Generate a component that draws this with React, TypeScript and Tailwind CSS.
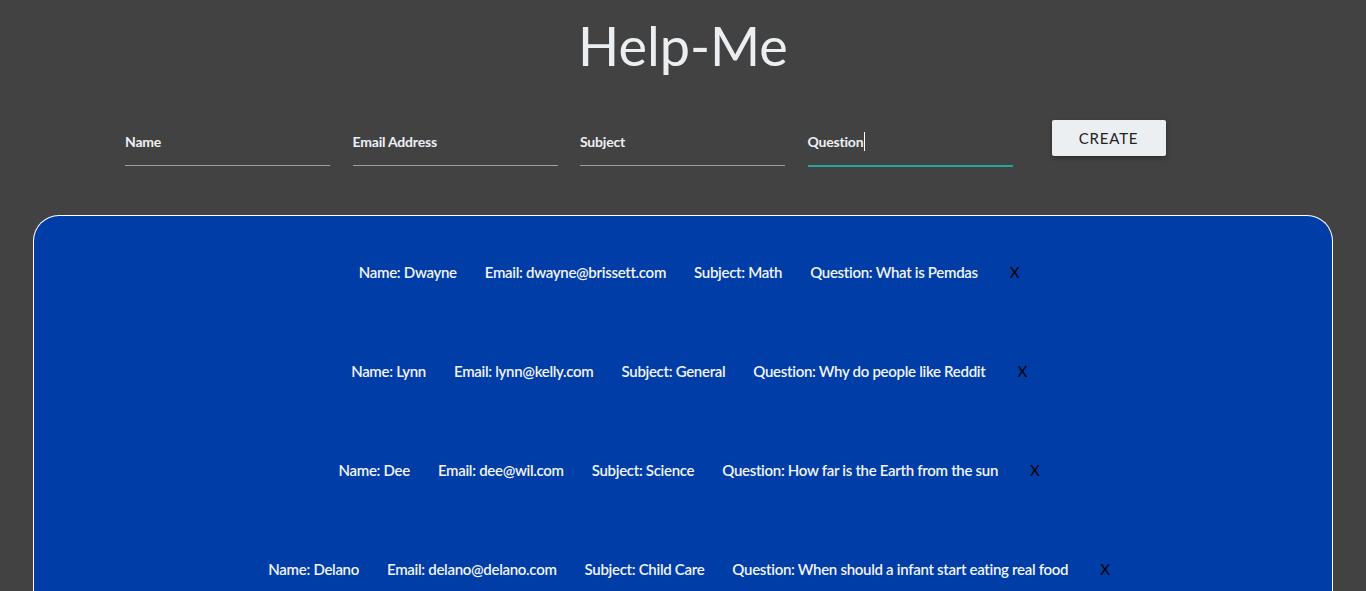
import React from "react";

type Ticket = { name: string; email: string; subject: string; question: string };

const tickets: Ticket[] = [
  { name: "Dwayne", email: "dwayne@brissett.com", subject: "Math", question: "What is Pemdas" },
  { name: "Lynn", email: "lynn@kelly.com", subject: "General", question: "Why do people like Reddit" },
  { name: "Dee", email: "dee@wil.com", subject: "Science", question: "How far is the Earth from the sun" },
  { name: "Delano", email: "delano@delano.com", subject: "Child Care", question: "When should a infant start eating real food" },
];

const fields = ["Name", "Email Address", "Subject", "Question"];

export default function App() {
  return (
    <div
      className="min-h-[591px] h-[591px] overflow-hidden bg-[#424242]"
      style={{ fontFamily: "Lato, 'Open Sans', sans-serif" }}
    >
      {/* Title */}
      <h1 className="pt-[10px] text-center text-[54px] leading-[72px] font-normal text-[#eceff1]">Help-Me</h1>

      {/* Form */}
      <div className="mt-[45px] flex items-start pl-[125px]">
        <div className="flex gap-[22.5px]">
          {fields.map((f, i) => (
            <div key={f} className="w-[205px]">
              <div className="flex h-[28px] items-center text-[14px] font-bold tracking-[-0.2px] text-[#eef0f4]">
                {f}
                {i === 3 && <span className="ml-[1px] inline-block h-[19px] w-[1px] bg-white" />}
              </div>
              <div className={i === 3 ? "mt-[10px] h-[2px] bg-[#26a69a]" : "mt-[10px] h-[1px] bg-[#9e9e9e]"} />
            </div>
          ))}
        </div>
        <button className="ml-[39px] -mt-[7px] h-[36px] w-[114px] rounded-[2px] bg-[#eceff1] text-[15px] tracking-[0.8px] text-[#222] shadow-[0_2px_4px_rgba(0,0,0,0.35)]">
          CREATE
        </button>
      </div>

      {/* Tickets */}
      <div className="mx-[33px] mt-[48px] h-[400px] rounded-t-[26px] border border-b-0 border-white bg-[#003da6] pt-[7px]">
        {tickets.map((t) => (
          <div
            key={t.email}
            className="flex h-[99px] items-center justify-center gap-[28px] pl-[12px] text-[15px] font-semibold tracking-[-0.3px] text-[#f2f4f8]"
          >
            <span>Name: {t.name}</span>
            <span>Email: {t.email}</span>
            <span>Subject: {t.subject}</span>
            <span>Question: {t.question}</span>
            <span className="ml-[4px] font-normal text-black">X</span>
          </div>
        ))}
      </div>
    </div>
  );
}
